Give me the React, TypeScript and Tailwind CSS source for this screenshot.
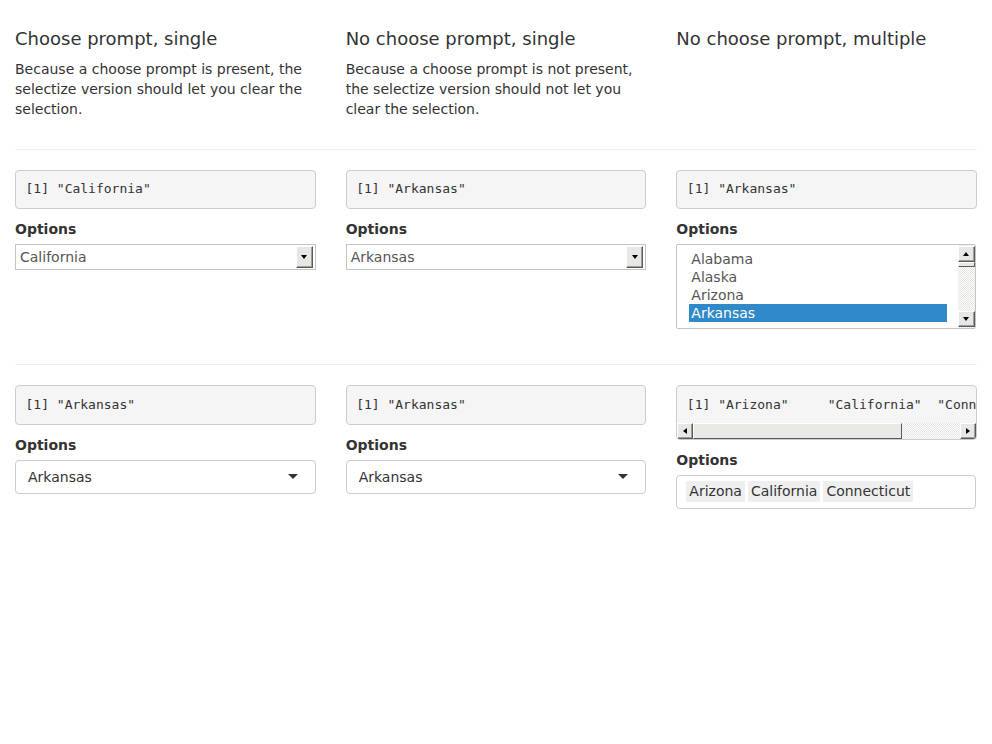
import type { ReactNode } from "react";

const sans = "font-['DejaVu_Sans','Liberation_Sans',sans-serif]";
const mono = "font-['DejaVu_Sans_Mono','Liberation_Mono',monospace]";

function Arrow({ dir }: { dir: "up" | "down" | "left" | "right" }) {
  const cls = {
    up: "border-x-[3.5px] border-b-[4px] border-x-transparent border-b-black",
    down: "border-x-[3.5px] border-t-[4px] border-x-transparent border-t-black",
    left: "border-y-[3.5px] border-r-[4px] border-y-transparent border-r-black",
    right: "border-y-[3.5px] border-l-[4px] border-y-transparent border-l-black",
  }[dir];
  return <div className={`h-0 w-0 ${cls}`} />;
}

function BevelButton({ dir, className }: { dir: "up" | "down" | "left" | "right"; className: string }) {
  return (
    <div
      className={`flex shrink-0 items-center justify-center border border-t-white border-l-white border-r-[#5a5a5a] border-b-[#5a5a5a] bg-[#e9e7e3] shadow-[inset_-1px_-1px_0_#a09e9a] ${className}`}
    >
      <Arrow dir={dir} />
    </div>
  );
}

const track =
  "bg-[image:repeating-conic-gradient(#e6e4e0_0_25%,#ffffff_0_50%)] bg-size-[2px_2px]";

function Output({ children }: { children: ReactNode }) {
  return (
    <pre
      className={`${mono} mb-[10px] whitespace-pre rounded-[4px] border border-[#ccc] bg-[#f5f5f5] p-[9.5px] text-[13px] leading-[18.57px] text-[#333]`}
    >
      {children}
    </pre>
  );
}

function Label() {
  return <div className="mb-[5px] text-[14px] font-bold leading-[20px] text-[#333]">Options</div>;
}

function NativeSelect({ value }: { value: string }) {
  return (
    <div className="mb-[15px] flex h-[26px] items-center border border-[#c4c4c4] bg-white pl-[4px]">
      <span className="flex-1 text-[14px] text-[#555]">{value}</span>
      <BevelButton dir="down" className="mr-[2px] h-[22px] w-[17px]" />
    </div>
  );
}

function Selectize({ value }: { value: string }) {
  return (
    <div className="mb-[15px] flex h-[34px] items-center rounded-[4px] border border-[#ccc] bg-white px-[12px]">
      <span className="flex-1 text-[14px] leading-[20px] text-[#333]">{value}</span>
      <div className="mr-[5px] h-0 w-0 border-x-[5px] border-t-[5px] border-x-transparent border-t-[#333]" />
    </div>
  );
}

function MultiList() {
  const states = ["Alabama", "Alaska", "Arizona", "Arkansas"];
  return (
    <div className="mb-[15px] mr-[1px] flex h-[85px] rounded-[2px] border border-[#c4c4c4] bg-white">
      <div className="flex-1 pl-[12px] pr-[11px] pt-[5px]">
        {states.map((s) => (
          <div
            key={s}
            className={`h-[18px] pl-[2px] text-[14px] leading-[18px] ${
              s === "Arkansas" ? "bg-[#3089c9] text-white" : "text-[#555]"
            }`}
          >
            {s}
          </div>
        ))}
      </div>
      <div className={`flex w-[17px] flex-col py-[1px] ${track}`}>
        <BevelButton dir="up" className="h-[16px] w-[17px]" />
        <div className="h-[5px] w-[17px] border border-t-white border-l-white border-r-[#5a5a5a] border-b-[#5a5a5a] bg-[#e9e7e3]" />
        <div className="flex-1" />
        <BevelButton dir="down" className="h-[16px] w-[17px]" />
      </div>
    </div>
  );
}

function ScrollOutput() {
  return (
    <div className="mb-[10px] overflow-hidden rounded-[4px] border border-[#ccc] bg-[#f5f5f5]">
      <pre
        className={`${mono} overflow-hidden whitespace-pre px-[9.5px] pb-[9px] pt-[9.5px] text-[13px] leading-[18.57px] text-[#333]`}
      >
        {'[1] "Arizona"     "California"  "Connecticut"'}
      </pre>
      <div className={`flex h-[16px] ${track}`}>
        <BevelButton dir="left" className="h-[16px] w-[16px]" />
        <div className="h-[16px] w-[209px] border border-t-white border-l-white border-r-[#5a5a5a] border-b-[#5a5a5a] bg-[#ebe9e5]" />
        <div className="flex-1" />
        <BevelButton dir="right" className="h-[16px] w-[16px]" />
      </div>
    </div>
  );
}

function Tags() {
  return (
    <div className="mb-[15px] mr-[1px] flex h-[34px] items-start gap-[3px] rounded-[4px] border border-[#ccc] bg-white pl-[9px] pt-[5px]">
      {["Arizona", "California", "Connecticut"].map((s) => (
        <span key={s} className="bg-[#efefef] px-[3px] py-[1px] text-[14px] leading-[19px] text-[#333]">
          {s}
        </span>
      ))}
    </div>
  );
}

function Header({ title, text }: { title: string; text?: string }) {
  return (
    <div>
      <h4 className="mb-[10px] mt-[10px] text-[18px] leading-[19.8px] text-[#333]">{title}</h4>
      {text && <p className="mb-[10px] text-[14px] leading-[20px] text-[#333]">{text}</p>}
    </div>
  );
}

export default function App() {
  return (
    <div className={`${sans} min-h-[744px] bg-white px-[15px] pt-[19px]`}>
      <div className="grid grid-cols-3 gap-x-[30px]">
        <Header
          title="Choose prompt, single"
          text="Because a choose prompt is present, the selectize version should let you clear the selection."
        />
        <Header
          title="No choose prompt, single"
          text="Because a choose prompt is not present, the selectize version should not let you clear the selection."
        />
        <Header title="No choose prompt, multiple" />
      </div>
      <hr className="my-[20px] border-t border-[#eee]" />
      <div className="grid grid-cols-3 items-start gap-x-[30px]">
        <div>
          <Output>{'[1] "California"'}</Output>
          <Label />
          <NativeSelect value="California" />
        </div>
        <div>
          <Output>{'[1] "Arkansas"'}</Output>
          <Label />
          <NativeSelect value="Arkansas" />
        </div>
        <div>
          <Output>{'[1] "Arkansas"'}</Output>
          <Label />
          <MultiList />
        </div>
      </div>
      <hr className="my-[20px] border-t border-[#eee]" />
      <div className="grid grid-cols-3 items-start gap-x-[30px]">
        <div>
          <Output>{'[1] "Arkansas"'}</Output>
          <Label />
          <Selectize value="Arkansas" />
        </div>
        <div>
          <Output>{'[1] "Arkansas"'}</Output>
          <Label />
          <Selectize value="Arkansas" />
        </div>
        <div>
          <ScrollOutput />
          <Label />
          <Tags />
        </div>
      </div>
    </div>
  );
}
